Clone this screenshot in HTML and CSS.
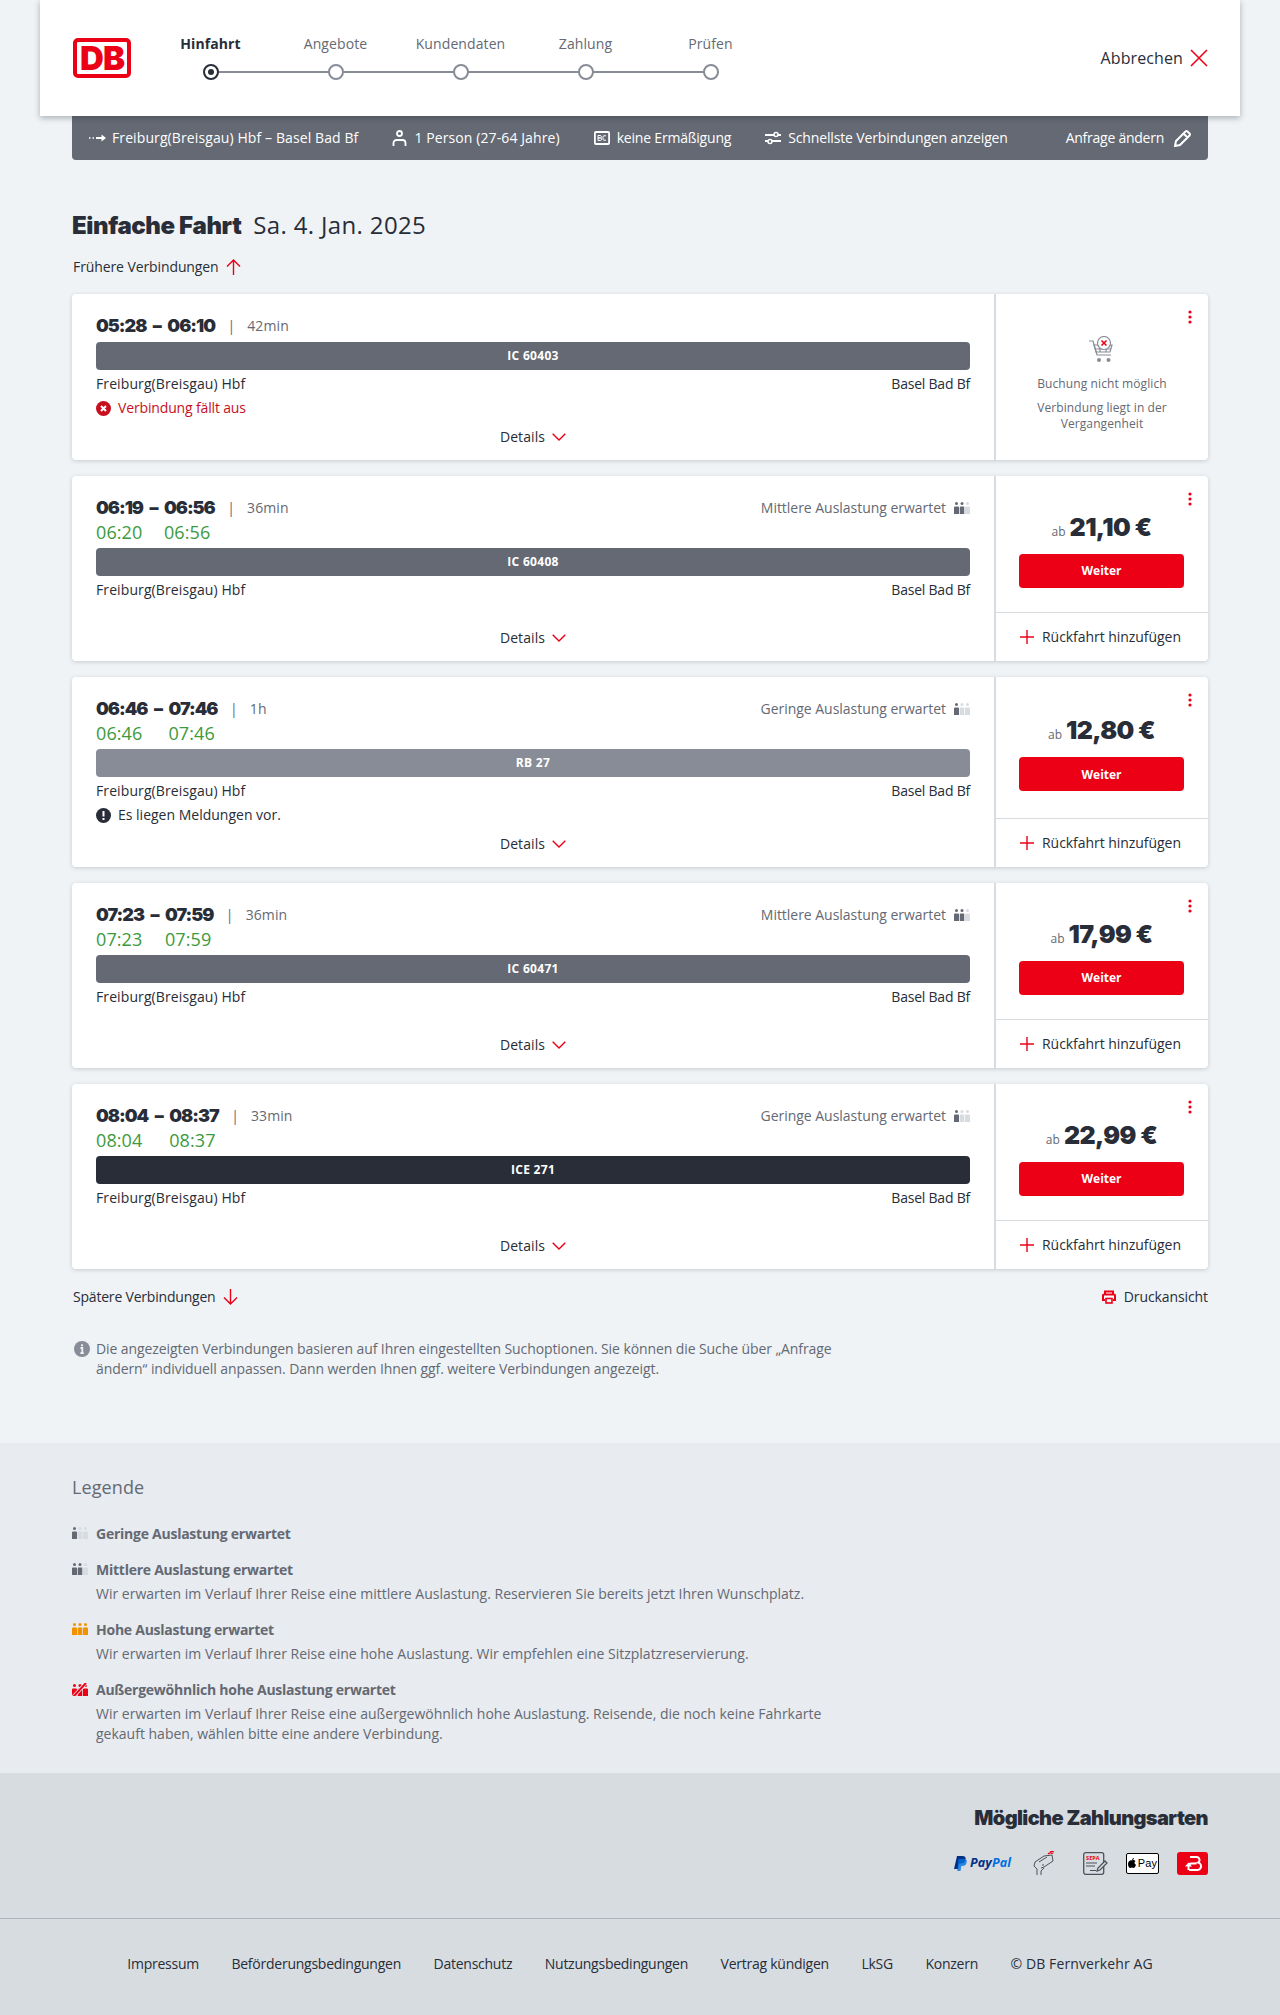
FILE: index.html
```html
<!DOCTYPE html>
<html lang="de">
<head>
  <meta charset="UTF-8">
  <title>Einfache Fahrt - Angebote</title>
  <link rel="stylesheet" href="styles.css">
</head>
<body>

  <svg class="defs" width="0" height="0">
    <symbol id="person" viewBox="0 0 5 12">
      <circle cx="2.5" cy="1.6" r="1.5"/>
      <path d="M0 5.5a1 1 0 0 1 1-1h3a1 1 0 0 1 1 1V12H0z"/>
    </symbol>
    <symbol id="chevron" viewBox="0 0 14 8">
      <path d="M.7.7 7 7 13.3.7" fill="none" stroke="#ec0016" stroke-width="1.4"/>
    </symbol>
    <symbol id="plus" viewBox="0 0 14 14">
      <path d="M7 0v14M0 7h14" fill="none" stroke="#ec0016" stroke-width="1.4"/>
    </symbol>
    <symbol id="kebab" viewBox="0 0 4 14">
      <circle cx="2" cy="2" r="1.6"/><circle cx="2" cy="7" r="1.6"/><circle cx="2" cy="12" r="1.6"/>
    </symbol>
  </svg>

  <header class="topbar">
    <div class="db-logo"><span>DB</span></div>
    <ol class="steps">
      <li class="step active"><span>Hinfahrt</span><i></i></li>
      <li class="step"><span>Angebote</span><i></i></li>
      <li class="step"><span>Kundendaten</span><i></i></li>
      <li class="step"><span>Zahlung</span><i></i></li>
      <li class="step"><span>Prüfen</span><i></i></li>
    </ol>
    <a class="cancel">Abbrechen
      <svg width="18" height="18" viewBox="0 0 18 18"><path d="M1 1l16 16M17 1 1 17" fill="none" stroke="#ec0016" stroke-width="1.6"/></svg>
    </a>
  </header>

  <main class="content">
    <div class="summary">
      <span class="summary-item route">
        <svg width="17" height="10" viewBox="0 0 17 10"><path d="M0 5h1.5M3.5 5h1.5" fill="none" stroke="#fff" stroke-width="1.6"/><path d="M7 4h5.500V1.500L17 5l-4.500 3.500V6H7z" fill="#fff"/></svg>
        Freiburg(Breisgau) Hbf – Basel Bad Bf
      </span>
      <span class="summary-item">
        <svg width="15" height="16" viewBox="0 0 15 16"><circle cx="7.5" cy="3.5" r="2.5" fill="none" stroke="#fff" stroke-width="1.8"/><path d="M1.5 16v-3a3 3 0 0 1 3-3h6a3 3 0 0 1 3 3v3" fill="none" stroke="#fff" stroke-width="1.8"/></svg>
        1 Person (27-64 Jahre)
      </span>
      <span class="summary-item discount">
        <svg width="16" height="14" viewBox="0 0 16 14"><rect width="16" height="14" rx="2" fill="#fff"/><rect x="1.8" y="2" width="12.4" height="10" fill="#646973"/><path d="M4 4.5h2.2a1 1 0 0 1 0 2.500H4zM4 7h2.400a1 1 0 0 1 0 2.500H4zM12 4.800H10a1 1 0 0 0-1 1v2.400a1 1 0 0 0 1 1h2" fill="none" stroke="#fff" stroke-width="1"/></svg>
        keine Ermäßigung
      </span>
      <span class="summary-item sort">
        <svg width="16" height="14" viewBox="0 0 16 14"><path d="M0 4h9M13 4h3M0 10h3M7 10h9" fill="none" stroke="#fff" stroke-width="1.800"/><circle cx="11" cy="3.500" r="2" fill="none" stroke="#fff" stroke-width="1.500"/><circle cx="5" cy="10.500" r="2" fill="none" stroke="#fff" stroke-width="1.500"/></svg>
        Schnellste Verbindungen anzeigen
      </span>
      <a class="summary-item change">Anfrage ändern
        <svg width="17" height="17" viewBox="0 0 17 17"><path d="M1 16l1-5L11.500 1.500a1.500 1.500 0 0 1 2 0l2 2a1.500 1.500 0 0 1 0 2L6 15z M9.500 3.500l4 4" fill="none" stroke="#fff" stroke-width="2"/></svg>
      </a>
    </div>

    <h1 class="title"><b>Einfache Fahrt</b> <span>Sa. 4. Jan. 2025</span></h1>

    <a class="nav-link earlier">Frühere Verbindungen
      <svg width="15" height="16" viewBox="0 0 15 16"><path d="M7.500 16V1M1 7.500 7.500 1 14 7.500" fill="none" stroke="#ec0016" stroke-width="1.400"/></svg>
    </a>

    <section class="results">

      <article class="card">
        <div class="trip">
          <div class="trip-head">
            <div class="times">
              <b>05:28</b><b>–</b><b>06:10</b><span class="dur">42min</span>
            </div>
          </div>
          <div class="train">IC 60403</div>
          <div class="stations"><span>Freiburg(Breisgau) Hbf</span><span>Basel Bad Bf</span></div>
          <div class="status red">
            <svg width="15" height="15" viewBox="0 0 15 15"><circle cx="7.500" cy="7.500" r="7.500" fill="#c80f1e"/><path d="M5 5l5 5M10 5l-5 5" stroke="#fff" stroke-width="2"/></svg>
            Verbindung fällt aus
          </div>
          <a class="details with-status">Details <svg width="14" height="8"><use href="#chevron"/></svg></a>
        </div>
        <div class="offer offer-off">
          <svg class="kebab" width="4" height="14"><use href="#kebab"/></svg>
          <svg class="cart" width="28" height="28" viewBox="0 0 28 28">
            <path d="M1 5h4l4 14h14" fill="none" stroke="#878c96" stroke-width="1.200"/>
            <path d="M6 9h18l-2 7H8zM7.500 13h15M12 9v7M18 9v7" fill="none" stroke="#878c96" stroke-width="1.200"/>
            <circle cx="16" cy="7" r="6.500" fill="#fff" stroke="#878c96" stroke-width="1.200"/>
            <path d="M13.500 4.500l5 5M18.500 4.500l-5 5" stroke="#ec0016" stroke-width="1.600"/>
            <circle cx="11" cy="24" r="2" fill="#878c96"/><circle cx="20.500" cy="24" r="2" fill="#878c96"/>
          </svg>
          <p>Buchung nicht möglich</p>
          <p class="offer-reason">Verbindung liegt in der Vergangenheit</p>
        </div>
      </article>

      <article class="card">
        <div class="trip">
          <div class="trip-head">
            <div class="times">
              <b>06:19</b><b>–</b><b>06:56</b><span class="dur">36min</span>
              <span class="real">06:20</span><span class="real arr">06:56</span>
            </div>
            <span class="load-text">Mittlere Auslastung erwartet
              <svg class="load" width="16" height="12"><use href="#person" width="5" height="12"/><use href="#person" x="5.500" width="5" height="12"/><use href="#person" x="11" width="5" height="12" class="off"/></svg>
            </span>
          </div>
          <div class="train">IC 60408</div>
          <div class="stations"><span>Freiburg(Breisgau) Hbf</span><span>Basel Bad Bf</span></div>
          <a class="details">Details <svg width="14" height="8"><use href="#chevron"/></svg></a>
        </div>
        <div class="offer">
          <svg class="kebab" width="4" height="14"><use href="#kebab"/></svg>
          <div class="offer-main">
            <div class="price"><small>ab</small> 21,10 €</div>
            <button class="btn">Weiter</button>
          </div>
          <a class="return"><svg width="14" height="14"><use href="#plus"/></svg> Rückfahrt hinzufügen</a>
        </div>
      </article>

      <article class="card">
        <div class="trip">
          <div class="trip-head">
            <div class="times">
              <b>06:46</b><b>–</b><b>07:46</b><span class="dur">1h</span>
              <span class="real">06:46</span><span class="real arr">07:46</span>
            </div>
            <span class="load-text">Geringe Auslastung erwartet
              <svg class="load" width="16" height="12"><use href="#person" width="5" height="12"/><use href="#person" x="5.500" width="5" height="12" class="off"/><use href="#person" x="11" width="5" height="12" class="off"/></svg>
            </span>
          </div>
          <div class="train regio">RB 27</div>
          <div class="stations"><span>Freiburg(Breisgau) Hbf</span><span>Basel Bad Bf</span></div>
          <div class="status">
            <svg width="15" height="15" viewBox="0 0 15 15"><circle cx="7.500" cy="7.500" r="7.500" fill="#282d37"/><path d="M7.500 3v5.500M7.500 10v2" stroke="#fff" stroke-width="2"/></svg>
            Es liegen Meldungen vor.
          </div>
          <a class="details with-status">Details <svg width="14" height="8"><use href="#chevron"/></svg></a>
        </div>
        <div class="offer">
          <svg class="kebab" width="4" height="14"><use href="#kebab"/></svg>
          <div class="offer-main">
            <div class="price"><small>ab</small> 12,80 €</div>
            <button class="btn">Weiter</button>
          </div>
          <a class="return"><svg width="14" height="14"><use href="#plus"/></svg> Rückfahrt hinzufügen</a>
        </div>
      </article>

      <article class="card">
        <div class="trip">
          <div class="trip-head">
            <div class="times">
              <b>07:23</b><b>–</b><b>07:59</b><span class="dur">36min</span>
              <span class="real">07:23</span><span class="real arr">07:59</span>
            </div>
            <span class="load-text">Mittlere Auslastung erwartet
              <svg class="load" width="16" height="12"><use href="#person" width="5" height="12"/><use href="#person" x="5.500" width="5" height="12"/><use href="#person" x="11" width="5" height="12" class="off"/></svg>
            </span>
          </div>
          <div class="train">IC 60471</div>
          <div class="stations"><span>Freiburg(Breisgau) Hbf</span><span>Basel Bad Bf</span></div>
          <a class="details">Details <svg width="14" height="8"><use href="#chevron"/></svg></a>
        </div>
        <div class="offer">
          <svg class="kebab" width="4" height="14"><use href="#kebab"/></svg>
          <div class="offer-main">
            <div class="price"><small>ab</small> 17,99 €</div>
            <button class="btn">Weiter</button>
          </div>
          <a class="return"><svg width="14" height="14"><use href="#plus"/></svg> Rückfahrt hinzufügen</a>
        </div>
      </article>

      <article class="card">
        <div class="trip">
          <div class="trip-head">
            <div class="times">
              <b>08:04</b><b>–</b><b>08:37</b><span class="dur">33min</span>
              <span class="real">08:04</span><span class="real arr">08:37</span>
            </div>
            <span class="load-text">Geringe Auslastung erwartet
              <svg class="load" width="16" height="12"><use href="#person" width="5" height="12"/><use href="#person" x="5.500" width="5" height="12" class="off"/><use href="#person" x="11" width="5" height="12" class="off"/></svg>
            </span>
          </div>
          <div class="train express">ICE 271</div>
          <div class="stations"><span>Freiburg(Breisgau) Hbf</span><span>Basel Bad Bf</span></div>
          <a class="details">Details <svg width="14" height="8"><use href="#chevron"/></svg></a>
        </div>
        <div class="offer">
          <svg class="kebab" width="4" height="14"><use href="#kebab"/></svg>
          <div class="offer-main">
            <div class="price"><small>ab</small> 22,99 €</div>
            <button class="btn">Weiter</button>
          </div>
          <a class="return"><svg width="14" height="14"><use href="#plus"/></svg> Rückfahrt hinzufügen</a>
        </div>
      </article>

    </section>

    <div class="after-results">
      <a class="nav-link later">Spätere Verbindungen
        <svg width="15" height="16" viewBox="0 0 15 16"><path d="M7.500 0v15M1 8.500 7.500 15 14 8.500" fill="none" stroke="#ec0016" stroke-width="1.400"/></svg>
      </a>
      <a class="nav-link print">
        <svg width="14" height="14" viewBox="0 0 14 14"><path d="M3 5V1.500h8V5M3 10H1V5.500a1 1 0 0 1 1-1h10a1 1 0 0 1 1 1V10h-2" fill="#fff" stroke="#ec0016" stroke-width="2"/><rect x="4" y="8.500" width="6" height="4.500" fill="none" stroke="#ec0016" stroke-width="1.600"/></svg>
        Druckansicht
      </a>
    </div>

    <div class="notice">
      <svg width="16" height="16" viewBox="0 0 16 16"><circle cx="8" cy="8" r="8" fill="#878c96"/><path d="M8 3.300v2M6.500 7H8.300v5M6.300 12.200h3.500" fill="none" stroke="#f0f3f5" stroke-width="1.800"/></svg>
      <p>Die angezeigten Verbindungen basieren auf Ihren eingestellten Suchoptionen. Sie können die Suche über „Anfrage ändern“ individuell anpassen. Dann werden Ihnen ggf. weitere Verbindungen angezeigt.</p>
    </div>
  </main>

  <section class="legend">
    <h2>Legende</h2>
    <div class="legend-item">
      <svg class="load" width="16" height="12"><use href="#person" width="5" height="12"/><use href="#person" x="5.500" width="5" height="12" class="off"/><use href="#person" x="11" width="5" height="12" class="off"/></svg>
      <div><h3>Geringe Auslastung erwartet</h3></div>
    </div>
    <div class="legend-item">
      <svg class="load" width="16" height="12"><use href="#person" width="5" height="12"/><use href="#person" x="5.500" width="5" height="12"/><use href="#person" x="11" width="5" height="12" class="off"/></svg>
      <div>
        <h3>Mittlere Auslastung erwartet</h3>
        <p>Wir erwarten im Verlauf Ihrer Reise eine mittlere Auslastung. Reservieren Sie bereits jetzt Ihren Wunschplatz.</p>
      </div>
    </div>
    <div class="legend-item">
      <svg class="load high" width="16" height="12"><use href="#person" width="5" height="12"/><use href="#person" x="5.500" width="5" height="12"/><use href="#person" x="11" width="5" height="12"/></svg>
      <div>
        <h3>Hohe Auslastung erwartet</h3>
        <p>Wir erwarten im Verlauf Ihrer Reise eine hohe Auslastung. Wir empfehlen eine Sitzplatzreservierung.</p>
      </div>
    </div>
    <div class="legend-item">
      <svg class="load full" width="16" height="13" viewBox="0 0 16 13">
        <use href="#person" y="1" width="5" height="12"/><use href="#person" x="5.500" y="1" width="5" height="12"/><use href="#person" x="11" y="1" width="5" height="12"/>
        <path d="M1 14 14 0" stroke="#e8ebef" stroke-width="3.600"/>
        <path d="M1 14 14 0" stroke="#ec0016" stroke-width="2"/>
      </svg>
      <div>
        <h3>Außergewöhnlich hohe Auslastung erwartet</h3>
        <p>Wir erwarten im Verlauf Ihrer Reise eine außergewöhnlich hohe Auslastung. Reisende, die noch keine Fahrkarte gekauft haben, wählen bitte eine andere Verbindung.</p>
      </div>
    </div>
  </section>

  <section class="payment">
    <h2>Mögliche Zahlungsarten</h2>
    <div class="payment-icons">
      <span class="paypal">
        <svg width="13" height="15" viewBox="0 0 13 15"><path d="M3 0h5.500C11 0 12 1.500 11.500 3.500 11 6.500 9 7.500 6.500 7.500H5L4 13H0z" fill="#003087"/><path d="M4.500 3h6.500c1.800.5 2 2 1.500 3.800C12 9 10.500 10 8.500 10H7.300l-.8 5H3.300z" fill="#0070e0" opacity=".8"/></svg>
        <span><b>Pay</b><b class="pal">Pal</b></span>
      </span>
      <svg class="contactless" width="22" height="24" viewBox="0 0 22 24"><path d="M4 24v-6l-3-3 1-4 9-6 8-1 1 6-9 6-3 1M8 24v-4l3-3M6 11l8-5M10 13v2" fill="none" stroke="#4c525c" stroke-width="1"/><path d="M15 3c1-1 3-1.500 5-.5M17 1c1-.5 3-.5 4 0" fill="none" stroke="#ec0016" stroke-width="1.200"/></svg>
      <svg width="25" height="23" viewBox="0 0 25 23">
        <rect x=".7" y=".7" width="20" height="21.600" rx="2" fill="#d7dce1" stroke="#4c525c" stroke-width="1.300"/>
        <text x="3" y="7.500" font-family="Open Sans" font-size="5.500" font-weight="700" fill="#ec0016">SEPA</text>
        <path d="M3 11h11M3 14h9M7 18.500h6" stroke="#4c525c" stroke-width="1.100"/>
        <path d="M14 19l1-3 7-7 2 2-7 7z" fill="#d7dce1" stroke="#4c525c" stroke-width="1.300"/>
      </svg>
      <span class="apple-pay">
        <svg width="8" height="10" viewBox="0 0 8 10"><path d="M4 2.500C5 1.800 6.500 1.800 7.500 3 6 4 6.200 6 8 6.700 7.500 8.500 6.500 10 5.500 10 4.800 10 4.500 9.600 3.800 9.600S2.800 10 2.200 10C1 10 0 8 0 6 0 3.500 2.500 1.800 4 2.500zM4 2C4 1 4.800 0 6 0c0 1-.8 2-2 2z"/></svg>
        Pay
      </span>
      <span class="bonus">
        <svg width="19" height="17" viewBox="0 0 19 17"><path d="M7 2h6.500a3 3 0 0 1 1.500 5.600A3.500 3.500 0 0 1 13.500 15H6" fill="none" stroke="#fff" stroke-width="2"/><path d="M13.500 8.500H8.500a3 3 0 0 0-3 3V15" fill="none" stroke="#fff" stroke-width="2"/><path d="M2 11.500l3.500-4 3.500 4z" fill="#fff"/></svg>
      </span>
    </div>
  </section>

  <footer class="footer">
    <a>Impressum</a>
    <a>Beförderungsbedingungen</a>
    <a>Datenschutz</a>
    <a>Nutzungsbedingungen</a>
    <a>Vertrag kündigen</a>
    <a>LkSG</a>
    <a>Konzern</a>
    <span class="copyright">© DB Fernverkehr AG</span>
  </footer>

</body>
</html>
```

FILE: styles.css
```css
* {
  box-sizing: border-box;
}

body {
  margin: 0;
  background-color: #eff3f6;
  color: #282d37;
  font-family: "Open Sans", Arial, sans-serif;
  font-size: 14px;
  letter-spacing: 0.1px;
  line-height: 20px;
}

h1, h2, h3, p, ol {
  margin: 0;
  padding: 0;
}

.defs {
  display: block;
  height: 0;
}

/* header */
.topbar {
  position: relative;
  z-index: 2;
  display: flex;
  align-items: center;
  height: 116px;
  margin: 0 40px;
  padding: 0 32px 0 33px;
  background-color: #fff;
  box-shadow: 0 2px 6px rgba(40, 45, 55, 0.35);
}

.db-logo {
  display: flex;
  align-items: center;
  justify-content: center;
  width: 58px;
  height: 40px;
  border: 4px solid #ec0016;
  border-radius: 5px;
  color: #ec0016;
  font-family: Inter, sans-serif;
  font-size: 33px;
  font-weight: 900;
  letter-spacing: -1px;
  line-height: 1;
}

.steps {
  display: flex;
  list-style: none;
  margin-left: 17px;
}

.step {
  position: relative;
  display: flex;
  flex-direction: column;
  align-items: center;
  width: 125px;
  height: 82px;
  padding-top: 17px;
  color: #646973;
}

.step i {
  position: relative;
  z-index: 1;
  width: 16px;
  height: 16px;
  margin-top: 10px;
  border: 2px solid #878c96;
  border-radius: 50%;
  background-color: #fff;
}

.step:not(:last-child)::after {
  content: "";
  position: absolute;
  top: 54px;
  left: 50%;
  width: 100%;
  height: 2px;
  background-color: #878c96;
}

.step.active {
  color: #282d37;
  font-weight: 700;
}

.step.active i {
  border-color: #282d37;
}

.step.active i::after {
  content: "";
  position: absolute;
  top: 3px;
  left: 3px;
  width: 6px;
  height: 6px;
  border-radius: 50%;
  background-color: #282d37;
}

.cancel {
  display: flex;
  align-items: center;
  gap: 7px;
  margin-left: auto;
  font-size: 16px;
}

/* main */
.content {
  padding: 0 72px 64px;
}

.summary {
  display: flex;
  align-items: center;
  gap: 34px;
  height: 44px;
  padding: 0 17px;
  border-radius: 0 0 4px 4px;
  background-color: #646973;
  color: #fff;
}

.summary-item {
  display: flex;
  align-items: center;
  gap: 7px;
}

.summary-item.route {
  gap: 6px;
}

.summary-item.discount {
  letter-spacing: -0.2px;
}

.summary-item.sort {
  letter-spacing: -0.14px;
}

.summary-item.change {
  gap: 10px;
  margin-left: auto;
  letter-spacing: -0.25px;
}

.title {
  display: flex;
  align-items: baseline;
  gap: 12px;
  height: 32px;
  margin-top: 49px;
  font-size: 24px;
  font-weight: 400;
  letter-spacing: 0.35px;
  line-height: 32px;
}

.title b {
  font-family: Inter, sans-serif;
  font-weight: 900;
  letter-spacing: -0.4px;
}

.nav-link {
  display: flex;
  align-items: center;
  gap: 7px;
  padding-left: 1px;
  letter-spacing: -0.1px;
}

.nav-link.later {
  letter-spacing: -0.2px;
}

.earlier {
  margin-top: 16px;
}

.results {
  display: flex;
  flex-direction: column;
  gap: 16px;
  margin-top: 17px;
}

.card {
  display: grid;
  grid-template-columns: 1fr 214px;
  border-radius: 4px;
  background-color: #fff;
  box-shadow: 0 1px 4px rgba(40, 45, 55, 0.2);
}

.trip {
  padding: 20px 24px 13px;
}

.trip-head {
  display: flex;
  align-items: flex-start;
  justify-content: space-between;
}

.times {
  display: grid;
  grid-template-columns: auto auto auto auto;
  justify-content: start;
  column-gap: 6.5px;
  font-size: 18px;
  line-height: 24px;
}

.times b {
  font-family: Inter, sans-serif;
  font-weight: 900;
  letter-spacing: -1px;
}

.dur {
  margin-left: 6px;
  color: #646973;
  font-size: 14px;
}

.dur::before {
  content: "|";
  margin-right: 12px;
}

.real {
  grid-column: 1;
  color: #3c9a3c;
  font-size: 18px;
}

.real.arr {
  grid-column: 3;
}

.load-text {
  display: flex;
  align-items: center;
  gap: 8px;
  height: 24px;
  color: #646973;
  letter-spacing: -0.03px;
}

.load {
  fill: #646973;
}

.load .off {
  fill: #d7dce1;
}

.load.high {
  fill: #f39200;
}

.load.full {
  fill: #ec0016;
}

.train {
  height: 28px;
  margin-top: 4px;
  border-radius: 4px;
  background-color: #646973;
  color: #fff;
  font-size: 12px;
  font-weight: 700;
  letter-spacing: 0.3px;
  line-height: 28px;
  text-align: center;
}

.train.regio {
  background-color: #878c96;
}

.train.express {
  background-color: #282d37;
}

.stations {
  display: flex;
  justify-content: space-between;
  margin-top: 4px;
}

.stations span:last-child {
  letter-spacing: -0.22px;
}

.status {
  display: flex;
  align-items: center;
  gap: 7px;
  margin-top: 4px;
  letter-spacing: 0;
}

.status.red {
  color: #c80f1e;
  letter-spacing: -0.15px;
}

.details {
  display: flex;
  align-items: center;
  justify-content: center;
  gap: 7px;
  margin-top: 28px;
}

.details.with-status {
  margin-top: 9px;
}

.offer {
  position: relative;
  display: flex;
  flex-direction: column;
  border-left: 2px solid #d7dce1;
}

.kebab {
  position: absolute;
  top: 16px;
  right: 16px;
  fill: #ec0016;
}

.offer-main {
  display: flex;
  flex: 1;
  flex-direction: column;
  justify-content: center;
  padding: 10px 24px 0 23px;
}

.price {
  display: flex;
  align-items: baseline;
  justify-content: center;
  gap: 4px;
  font-family: Inter, sans-serif;
  font-size: 25px;
  font-weight: 900;
  letter-spacing: -0.6px;
  line-height: 32px;
}

.price small {
  color: #646973;
  font-family: "Open Sans", sans-serif;
  font-size: 12px;
  font-weight: 400;
  letter-spacing: 0;
}

.btn {
  width: 165px;
  height: 34px;
  margin-top: 6px;
  border: 0;
  border-radius: 4px;
  background-color: #ec0016;
  color: #fff;
  font-family: inherit;
  font-size: 12px;
  font-weight: 700;
}

.return {
  display: flex;
  align-items: center;
  gap: 8px;
  height: 49px;
  padding-left: 24px;
  border-top: 1px solid #d7dce1;
  letter-spacing: -0.05px;
}

.offer-off {
  align-items: center;
  padding: 42px 16px 0;
  color: #646973;
  font-size: 12px;
  line-height: 16px;
  text-align: center;
}

.offer-off p {
  margin-top: 12px;
}

.offer-off .offer-reason {
  margin-top: 8px;
}

.after-results {
  display: flex;
  justify-content: space-between;
  margin-top: 18px;
}

.print {
  gap: 8px;
}

.notice {
  display: flex;
  gap: 6px;
  margin-top: 32px;
  padding-left: 2px;
  color: #646973;
  letter-spacing: -0.09px;
}

.notice svg {
  flex: none;
  margin-top: 2px;
}

.notice p {
  width: 760px;
}

/* legend */
.legend {
  padding: 32px 72px 29px;
  background-color: #e8ebef;
  color: #646973;
}

.legend h2 {
  margin-bottom: 25px;
  font-size: 18px;
  font-weight: 400;
  line-height: 24px;
}

.legend-item {
  display: flex;
  gap: 8px;
  margin-bottom: 16px;
}

.legend-item:last-child {
  margin-bottom: 0;
}

.legend-item svg {
  flex: none;
  margin-top: 3px;
}

.legend-item h3 {
  font-size: 14px;
  font-weight: 700;
  letter-spacing: -0.25px;
}

.legend-item p {
  width: 745px;
  margin-top: 4px;
  letter-spacing: 0;
}

/* payment + footer */
.payment {
  height: 145px;
  padding: 31px 72px 0 0;
  background-color: #d7dce1;
  text-align: right;
}

.payment h2 {
  font-family: Inter, sans-serif;
  font-size: 20px;
  font-weight: 900;
  letter-spacing: -0.6px;
  line-height: 28px;
}

.payment-icons {
  display: flex;
  align-items: center;
  justify-content: flex-end;
  gap: 18px;
  margin-top: 19px;
}

.paypal {
  display: flex;
  align-items: center;
  gap: 3px;
  margin-right: 4px;
  color: #003087;
  font-size: 12.5px;
  font-style: italic;
}

.paypal .pal {
  color: #0070e0;
}

.contactless {
  margin-right: 10px;
}

.apple-pay {
  display: flex;
  align-items: center;
  justify-content: center;
  gap: 2px;
  width: 33px;
  height: 21px;
  border: 1px solid #000;
  border-radius: 2px;
  background-color: #fff;
  color: #000;
  font-family: "Liberation Sans", sans-serif;
  font-size: 11px;
}

.bonus {
  display: flex;
  align-items: center;
  justify-content: center;
  width: 31px;
  height: 23px;
  border-radius: 3px;
  background-color: #ec0016;
}

.footer {
  display: flex;
  align-items: center;
  justify-content: center;
  gap: 32.5px;
  height: 98px;
  padding-bottom: 8px;
  border-top: 1px solid #afb4bb;
  background-color: #d7dce1;
  letter-spacing: -0.25px;
}

.copyright {
  letter-spacing: 0.1px;
}
```
